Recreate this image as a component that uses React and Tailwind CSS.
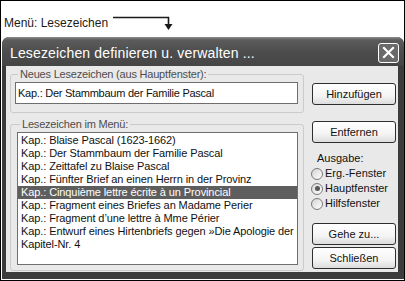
import React from "react";

const items = [
  "Kap.: Blaise Pascal (1623-1662)",
  "Kap.: Der Stammbaum der Familie Pascal",
  "Kap.: Zeittafel zu Blaise Pascal",
  "Kap.: Fünfter Brief an einen Herrn in der Provinz",
  "Kap.: Cinquième lettre écrite à un Provincial",
  "Kap.: Fragment eines Briefes an Madame Perier",
  "Kap.: Fragment d’une lettre à Mme Périer",
  "Kap.: Entwurf eines Hirtenbriefs gegen »Die Apologie der Kasuisten«",
  "Kapitel-Nr. 4",
];

const XpButton = ({ title, className = "" }) => (
  <div
    className={`h-[22px] w-full flex items-center justify-center rounded-[3px] border border-[#2e2e2e] bg-[linear-gradient(180deg,#ffffff_0%,#f4f4f4_60%,#dcdcdc_100%)] text-[11px] text-[#111] ${className}`}
  >
    {title}
  </div>
);

const Radio = ({ label, checked }) => (
  <div className="h-[15px] flex items-center gap-[2px] -ml-[1px]">
    <div className="w-[12px] h-[12px] rounded-full border border-[#7a7a7a] bg-[linear-gradient(135deg,#d4d4d4_0%,#ffffff_100%)] flex items-center justify-center">
      {checked && <div className="w-[5px] h-[5px] rounded-full bg-[#575757]" />}
    </div>
    <span className="text-[11px] leading-[13px] text-[#111]">{label}</span>
  </div>
);

const App = () => {
  return (
    <div className="relative w-[405px] h-[281px] overflow-hidden border border-black bg-white font-['Liberation_Sans',Arial,sans-serif]">
      {/* header with pointer arrow */}
      <div className="h-[36px] pl-[3px] pt-[9px]">
        <span className="text-[12px] leading-[14px] text-[#1a1a1a]">Menü: Lesezeichen</span>
      </div>
      <svg
        className="absolute left-[-1px] top-[-1px]"
        width="200"
        height="36"
        viewBox="0 0 200 36"
      >
        <path d="M113 17.5 H168.5 V25" stroke="#1a1a1a" strokeWidth="1.6" fill="none" />
        <path d="M164.5 24 H172.5 L168.5 30 Z" fill="#1a1a1a" />
      </svg>

      {/* dialog */}
      <div className="ml-[1px] w-[402px] h-[242px] rounded-t-[7px] bg-[#3c3c3c] flex flex-col">
        <div className="h-[29px] rounded-t-[7px] bg-[linear-gradient(180deg,#8c8c8c_0px,#5c5c5c_3px,#4d4d4d_50%,#454545_100%)] flex items-center justify-between pl-[8px] pr-[5px]">
          <span className="text-[14px] leading-[16px] text-white pt-[3px] tracking-[0.15px]">
            Lesezeichen definieren u. verwalten ...
          </span>
          <div className="w-[21px] h-[20px] mt-[2px] rounded-[3px] border border-white bg-[#6a6a6a] flex items-center justify-center">
            <svg width="13" height="13" viewBox="0 0 13 13">
              <path d="M2 2 L11 11 M11 2 L2 11" stroke="white" strokeWidth="2.2" strokeLinecap="square" />
            </svg>
          </div>
        </div>

        <div className="flex-1 flex pl-[4px] pr-[6px] pb-[7px]">
          <div className="flex-1 bg-[#e9e9e9] flex">
            {/* left column */}
            <div className="ml-[4px] w-[294px] shrink-0 flex flex-col">
              <fieldset className="min-w-0 mt-[2px] border border-[#cbcbcb] rounded-[3px] pl-[4px] pr-[5px] pb-[8px]">
                <legend className="ml-[3px] px-[2px] text-[11px] leading-[12px] text-[#4d4d4d] tracking-[-0.2px]">
                  Neues Lesezeichen (aus Hauptfenster):
                </legend>
                <div className="mt-[2px] h-[22px] border border-[#6e6e6e] bg-white flex items-center pl-[2px] text-[11px] text-[#111] tracking-[-0.25px]">
                  Kap.: Der Stammbaum der Familie Pascal
                </div>
              </fieldset>

              <fieldset className="min-w-0 mt-[5px] border border-[#cbcbcb] rounded-[3px] pl-[6px] pr-[5px] pb-[5px]">
                <legend className="ml-[3px] px-[2px] text-[11px] leading-[12px] text-[#4d4d4d] tracking-[-0.2px]">
                  Lesezeichen im Menü:
                </legend>
                <div className="mt-[2px] h-[133px] border border-[#6e6e6e] bg-white overflow-hidden pt-[1px]">
                  {items.map((item, i) => (
                    <div
                      key={i}
                      className={`h-[13px] leading-[13px] pl-[3px] whitespace-nowrap text-[11px] tracking-[-0.1px] ${
                        i === 4 ? "bg-[#5e5e5e] text-white" : "text-[#111]"
                      }`}
                    >
                      {item}
                    </div>
                  ))}
                </div>
              </fieldset>
            </div>

            {/* right column */}
            <div className="ml-[8px] w-[84px] shrink-0 flex flex-col">
              <XpButton title="Hinzufügen" className="mt-[17px]" />
              <XpButton title="Entfernen" className="mt-[16px]" />
              <div className="mt-[9px] pl-[5px] text-[11px] leading-[12px] text-[#111]">Ausgabe:</div>
              <div className="mt-[2px] flex flex-col">
                <Radio label="Erg.-Fenster" />
                <Radio label="Hauptfenster" checked />
                <Radio label="Hilfsfenster" />
              </div>
              <XpButton title="Gehe zu..." className="mt-[12px]" />
              <XpButton title="Schließen" className="mt-[2px]" />
            </div>
          </div>
        </div>
      </div>
    </div>
  );
};

export default App;
